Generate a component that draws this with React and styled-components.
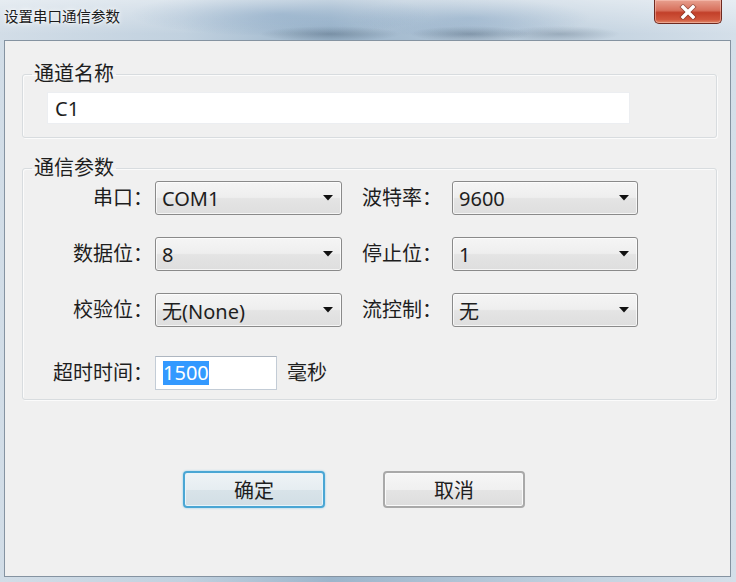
import React from 'react'
import styled, { createGlobalStyle } from 'styled-components'

const GlobalStyle = createGlobalStyle`
  html, body {
    margin: 0;
    padding: 0;
  }
  body {
    width: 736px;
    height: 582px;
    overflow: hidden;
    font-family: "Noto Sans", "Noto Sans CJK SC", sans-serif;
    color: #1e1e1e;
  }
`

const Window = styled.div`
  width: 736px;
  height: 582px;
  box-sizing: border-box;
  padding: 0 5px 5px 4px;
  display: flex;
  flex-direction: column;
  background:
    linear-gradient(to bottom, rgba(255, 255, 255, 0.45), rgba(255, 255, 255, 0) 34px),
    radial-gradient(ellipse 70px 8px at 330px 34px, rgba(70, 90, 110, 0.4), transparent),
    radial-gradient(ellipse 60px 8px at 470px 34px, rgba(70, 90, 110, 0.4), transparent),
    radial-gradient(ellipse 60px 8px at 560px 34px, rgba(70, 90, 110, 0.3), transparent),
    radial-gradient(ellipse 150px 22px at 280px 14px, rgba(80, 125, 170, 0.45), transparent),
    radial-gradient(ellipse 120px 20px at 470px 18px, rgba(80, 125, 170, 0.35), transparent),
    linear-gradient(to right, #d2dde7 0%, #c1d1df 25%, #9cb5cb 45%, #afc3d5 62%, #c5d4e1 82%, #d4dfe9 100%);
`

const TitleBar = styled.div`
  height: 40px;
  flex-shrink: 0;
  display: flex;
  justify-content: space-between;
  align-items: flex-start;
`

const Title = styled.div`
  padding: 7px 0 0 0;
  font-size: 14.5px;
  line-height: 18px;
  color: #1b1b1b;
  text-shadow: 0 0 6px #fff, 0 0 3px #fff;
`

const CloseButton = styled.div`
  width: 68px;
  height: 24px;
  margin-right: 9px;
  box-sizing: border-box;
  border: 1px solid #6e2a20;
  border-top: none;
  border-radius: 0 0 5px 5px;
  background: linear-gradient(to bottom, #e8a08f 0%, #d7705c 45%, #c2402a 55%, #d0563c 85%, #e08a6a 100%);
  box-shadow: inset 0 0 0 1px rgba(255, 210, 200, 0.45);
  display: flex;
  align-items: center;
  justify-content: center;
`

const Client = styled.div`
  flex: 1;
  background: #f0f0f0;
  border: 1px solid #8593a1;
  display: flex;
  flex-direction: column;
  padding: 22px 13px 0 17px;
`

const Group = styled.fieldset`
  margin: 0;
  margin-top: ${p => p.$top || 0}px;
  padding: 0;
  border: 1px solid #d8dcdf;
  border-radius: 3px;
  box-shadow: inset 1px 1px 0 #fbfbfb, 1px 1px 0 #fbfbfb;
  min-width: 0;
`

const Legend = styled.legend`
  margin-left: 9px;
  padding: 0 2px;
  font-size: 20px;
  line-height: 22px;
  color: #1e1e1e;
`

const NameBody = styled.div`
  padding: 7px 0 13px 24px;
`

const TextBox = styled.div`
  box-sizing: border-box;
  width: ${p => p.$width}px;
  height: ${p => p.$height}px;
  background: #fff;
  border: 1px solid ${p => (p.$framed ? '#c3ccd6' : '#eceef1')};
  border-top-color: ${p => (p.$framed ? '#aeb6c0' : '#eceef1')};
  padding-left: 7px;
  display: flex;
  align-items: center;
  font-size: 20px;
  color: #1e1e1e;
`

const Selected = styled.span`
  background: #3399ff;
  color: #fff;
  line-height: 24px;
`

const ParamGrid = styled.div`
  display: grid;
  grid-template-columns: 125px 187px 110px 186px;
  grid-template-rows: 34px 34px 34px 41px;
  row-gap: 22px;
  align-items: center;
  padding: 2px 0 9px 7px;
`

const Label = styled.div`
  font-size: 20px;
  line-height: 34px;
  height: 34px;
  white-space: nowrap;
  text-align: ${p => (p.$second ? 'left' : 'right')};
  padding: ${p => (p.$second ? '0 0 0 20px' : '0 2px 0 0')};
  align-self: ${p => (p.$bottom ? 'end' : 'center')};
`

const Combo = styled.div`
  box-sizing: border-box;
  height: 34px;
  border: 1px solid #8a8a8a;
  border-radius: 3px;
  background: linear-gradient(to bottom, #f5f5f5 0%, #eeeeee 48%, #e4e4e4 52%, #dedede 100%);
  box-shadow: inset 0 0 0 1px rgba(255, 255, 255, 0.7);
  display: flex;
  align-items: center;
  justify-content: space-between;
  padding: 0 8px 0 6px;
  font-size: 20px;
  color: #1e1e1e;
`

const Arrow = styled.svg`
  width: 10px;
  height: 6px;
  flex-shrink: 0;
`

const TimeoutCell = styled.div`
  grid-column: 2 / span 3;
  align-self: end;
  display: flex;
  align-items: center;
  gap: 10px;
`

const Unit = styled.span`
  font-size: 20px;
  line-height: 24px;
`

const ButtonRow = styled.div`
  display: flex;
  gap: 58px;
  margin-top: 71px;
  padding-left: 161px;
`

const Button = styled.div`
  box-sizing: border-box;
  width: 142px;
  height: 37px;
  border-radius: 4px;
  border: 2px solid ${p => (p.$default ? '#4aa6d4' : '#a9a9a9')};
  box-shadow: ${p => (p.$default ? '0 0 2px #7cc6ea, inset 0 0 0 1px #e8f4fa' : 'inset 0 0 0 1px #fafafa')};
  background: ${p =>
    p.$default
      ? 'linear-gradient(to bottom, #eef3f6 0%, #e6edf1 50%, #d8e3e9 52%, #d2dee5 100%)'
      : 'linear-gradient(to bottom, #f6f6f6 0%, #f0f0f0 50%, #e4e4e4 52%, #dddddd 100%)'};
  display: flex;
  align-items: center;
  justify-content: center;
  font-size: 20px;
  color: #1e1e1e;
`

function ComboBox({ value }) {
  return (
    <Combo>
      <span>{value}</span>
      <Arrow viewBox="0 0 10 6">
        <polygon points="0,0 10,0 5,5.5" fill="#111" />
      </Arrow>
    </Combo>
  )
}

const rows = [
  ['串口：', 'COM1', '波特率：', '9600'],
  ['数据位：', '8', '停止位：', '1'],
  ['校验位：', '无(None)', '流控制：', '无'],
]

export default function App() {
  return (
    <>
      <GlobalStyle />
      <Window>
        <TitleBar>
          <Title>设置串口通信参数</Title>
          <CloseButton>
            <svg width="18" height="16" viewBox="0 0 18 16">
              <path d="M4 3 L14 13 M14 3 L4 13" stroke="#5a2018" strokeWidth="5" strokeLinecap="square" opacity="0.5" />
              <path d="M4 3 L14 13 M14 3 L4 13" stroke="#ffffff" strokeWidth="3.4" strokeLinecap="square" />
            </svg>
          </CloseButton>
        </TitleBar>
        <Client>
          <Group>
            <Legend>通道名称</Legend>
            <NameBody>
              <TextBox $width={583} $height={32}>C1</TextBox>
            </NameBody>
          </Group>
          <Group $top={19}>
            <Legend>通信参数</Legend>
            <ParamGrid>
              {rows.map(r => (
                <React.Fragment key={r[0]}>
                  <Label>{r[0]}</Label>
                  <ComboBox value={r[1]} />
                  <Label $second>{r[2]}</Label>
                  <ComboBox value={r[3]} />
                </React.Fragment>
              ))}
              <Label $bottom>超时时间：</Label>
              <TimeoutCell>
                <TextBox $width={122} $height={34} $framed>
                  <Selected>1500</Selected>
                </TextBox>
                <Unit>毫秒</Unit>
              </TimeoutCell>
            </ParamGrid>
          </Group>
          <ButtonRow>
            <Button $default>确定</Button>
            <Button>取消</Button>
          </ButtonRow>
        </Client>
      </Window>
    </>
  )
}
